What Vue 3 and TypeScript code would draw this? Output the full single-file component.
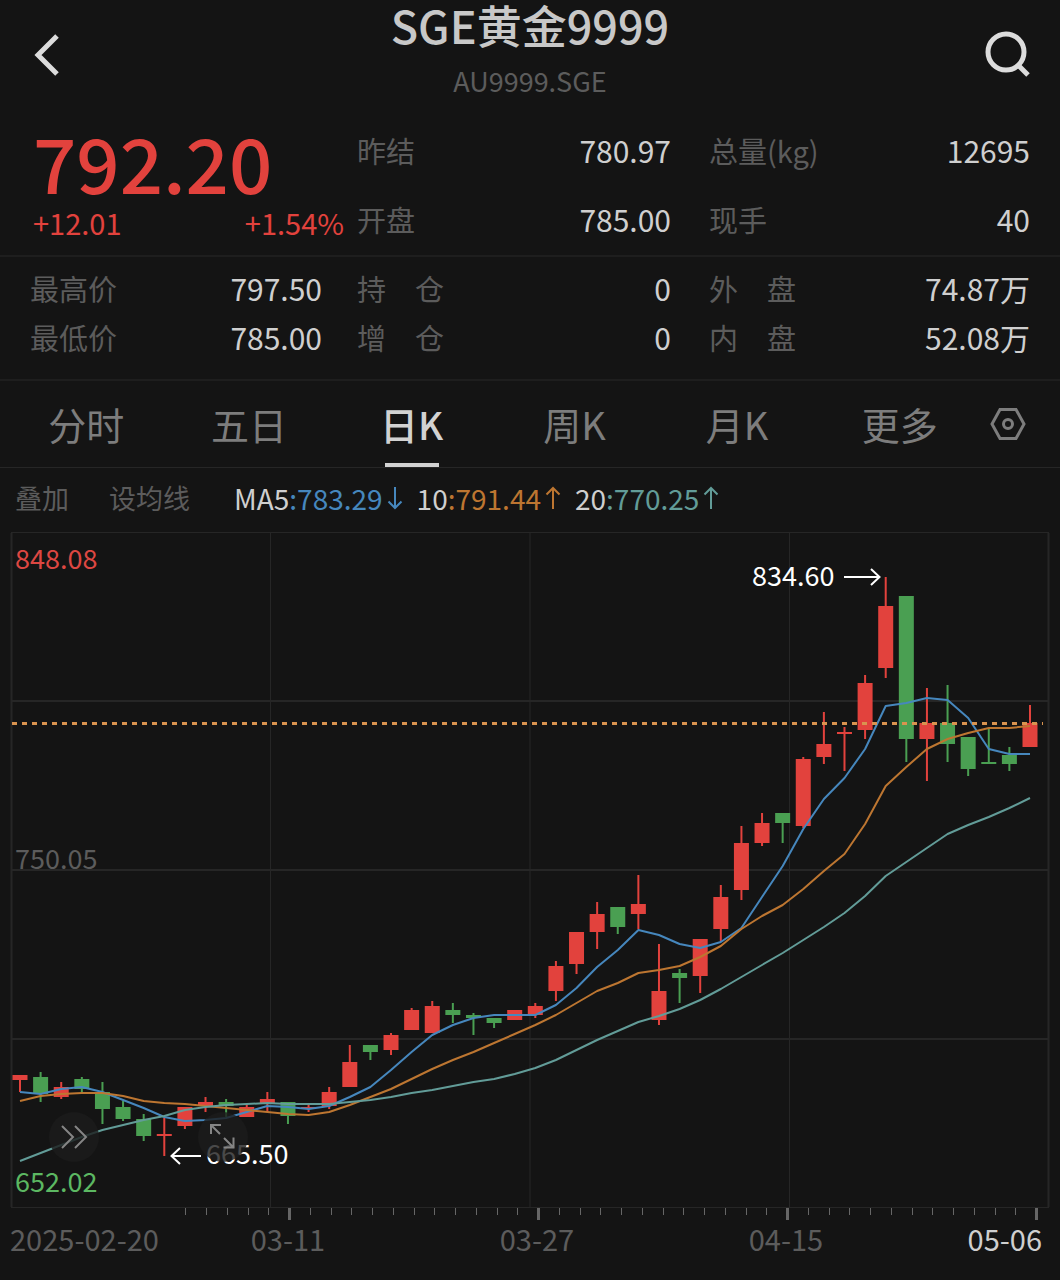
<script setup lang="ts">
import { ref } from 'vue'

type Candle = { up: boolean; top: number; bottom: number; high: number; low: number }

const tabs = ['分时', '五日', '日K', '周K', '月K', '更多']
const active = ref('日K')

const mainQuotes = [
  [
    { label: '昨结', value: '780.97' },
    { label: '开盘', value: '785.00' },
  ],
  [
    { label: '总量(kg)', value: '12695' },
    { label: '现手', value: '40' },
  ],
]

const subQuotes = [
  [
    { label: '最高价', value: '797.50' },
    { label: '最低价', value: '785.00' },
  ],
  [
    { label: '持　仓', value: '0' },
    { label: '增　仓', value: '0' },
  ],
  [
    { label: '外　盘', value: '74.87万' },
    { label: '内　盘', value: '52.08万' },
  ],
]

const averages = [
  { name: 'MA5', value: '783.29', dir: 'down', tone: 'blue' },
  { name: '10', value: '791.44', dir: 'up', tone: 'orange' },
  { name: '20', value: '770.25', dir: 'up', tone: 'teal' },
]

const R = true
const G = false
// direction, body top, body bottom, wick top, wick bottom
const raw: [boolean, number, number, number, number][] = [
  [R, 1075, 1080, 1075, 1092], [G, 1077, 1094, 1072, 1102], [R, 1087, 1097, 1082, 1099],
  [G, 1079, 1089, 1077, 1092], [G, 1092, 1109, 1082, 1124], [G, 1107, 1119, 1101, 1121],
  [G, 1119, 1136, 1114, 1141], [R, 1134, 1136, 1118, 1156], [R, 1107, 1126, 1107, 1129],
  [R, 1102, 1106, 1097, 1112], [G, 1102, 1106, 1099, 1117], [R, 1107, 1117, 1104, 1117],
  [R, 1099, 1104, 1092, 1112], [G, 1102, 1116, 1102, 1124], [R, 1107, 1109, 1105, 1112],
  [R, 1092, 1106, 1087, 1109], [R, 1062, 1087, 1045, 1087], [G, 1045, 1052, 1045, 1060],
  [R, 1035, 1050, 1033, 1055], [R, 1010, 1030, 1008, 1030], [R, 1006, 1033, 1001, 1033],
  [G, 1010, 1015, 1003, 1023], [G, 1015, 1018, 1013, 1035], [G, 1018, 1023, 1018, 1028],
  [R, 1010, 1020, 1010, 1020], [R, 1006, 1015, 1003, 1018], [R, 966, 991, 961, 1001],
  [R, 932, 964, 932, 974], [R, 914, 932, 902, 949], [G, 907, 927, 907, 934],
  [R, 904, 914, 875, 929], [R, 991, 1020, 944, 1025], [G, 973, 978, 969, 1003],
  [R, 939, 976, 939, 993], [R, 897, 929, 885, 941], [R, 843, 890, 826, 900],
  [R, 823, 843, 813, 846], [G, 813, 823, 813, 843], [R, 759, 826, 757, 828],
  [R, 744, 757, 712, 764], [R, 732, 734, 727, 771], [R, 683, 730, 675, 739],
  [R, 606, 668, 577, 678], [G, 596, 739, 596, 762], [R, 723, 739, 688, 781],
  [G, 723, 744, 685, 762], [G, 737, 769, 737, 776], [G, 762, 764, 729, 764],
  [G, 755, 764, 747, 771], [R, 723, 747, 705, 747],
]
const candles: Candle[] = raw.map(([up, top, bottom, high, low]) => ({ up, top, bottom, high, low }))

const ma5 = [
  1092, 1094, 1089, 1087, 1092, 1100, 1108, 1117, 1121, 1120, 1118, 1112, 1106, 1107, 1109, 1106, 1097,
  1087, 1070, 1052, 1035, 1025, 1018, 1015, 1015, 1015, 1005, 988, 967, 950, 930, 935, 944, 948, 942,
  928, 897, 866, 829, 799, 778, 749, 706, 703, 698, 700, 718, 749, 754, 754,
]
const ma10 = [
  1101, 1096, 1094, 1093, 1093, 1096, 1101, 1103, 1104, 1106, 1108, 1110, 1112, 1114, 1115, 1112, 1105,
  1097, 1089, 1079, 1069, 1060, 1052, 1043, 1034, 1025, 1015, 1003, 991, 983, 973, 970, 966, 957, 946,
  929, 916, 905, 889, 871, 854, 824, 786, 767, 749, 739, 733, 728, 728, 726,
]
const ma20 = [
  1161, 1153, 1145, 1137, 1130, 1125, 1120, 1116, 1110, 1107, 1105, 1104, 1103, 1104, 1104, 1104, 1102,
  1100, 1097, 1093, 1090, 1086, 1082, 1079, 1074, 1068, 1060, 1050, 1040, 1031, 1022, 1016, 1009, 1000,
  989, 977, 965, 953, 940, 927, 913, 896, 876, 862, 848, 834, 825, 817, 808, 798,
]

const xAt = (i: number) => 20 + (i * 1010) / 49
const line = (ys: number[]) => ys.map((y, i) => `${xAt(i).toFixed(1)},${y}`).join(' ')

// one tick per trading day, a heavy one every twelve
const ticks = Array.from({ length: 42 }, (_, n) => {
  const k = n - 5
  return { x: Math.round(289 + k * 20.75), major: k % 12 === 0 }
})
</script>

<template>
  <main class="page">
    <header class="top">
      <button class="icon-btn" aria-label="返回">
        <svg width="60" height="60" viewBox="0 0 60 60"><path d="M41 12 22 31 41 50" class="ico" /></svg>
      </button>
      <div class="heading">
        <h1>SGE黄金9999</h1>
        <p>AU9999.SGE</p>
      </div>
      <button class="icon-btn" aria-label="搜索">
        <svg width="60" height="60" viewBox="0 0 60 60">
          <circle cx="22" cy="28" r="18" class="ico" />
          <path d="M34 41 44 51" class="ico" />
        </svg>
      </button>
    </header>

    <section class="quotes main">
      <div class="price">
        <strong>792.20</strong>
        <div class="change"><span>+12.01</span><span>+1.54%</span></div>
      </div>
      <dl v-for="(col, i) in mainQuotes" :key="i">
        <div v-for="q in col" :key="q.label"><dt>{{ q.label }}</dt><dd>{{ q.value }}</dd></div>
      </dl>
    </section>

    <section class="quotes sub">
      <dl v-for="(col, i) in subQuotes" :key="i">
        <div v-for="q in col" :key="q.label"><dt>{{ q.label }}</dt><dd>{{ q.value }}</dd></div>
      </dl>
    </section>

    <nav class="tabs">
      <button v-for="t in tabs" :key="t" class="tab" :class="{ active: t === active }" @click="active = t">
        <span>{{ t }}</span>
      </button>
      <button class="gear" aria-label="设置">
        <svg width="36" height="36" viewBox="0 0 36 36">
          <path d="M10 3.500H26L34 18 26 32.500H10L2 18Z" />
          <circle cx="18" cy="18" r="4.500" />
        </svg>
      </button>
    </nav>

    <div class="averages">
      <button class="link">叠加</button>
      <button class="link">设均线</button>
      <div class="list">
        <span v-for="a in averages" :key="a.name" class="avg" :class="a.tone">
          <span><b>{{ a.name }}</b>:{{ a.value }}</span>
          <svg width="16" height="24" viewBox="0 0 16 24">
            <path v-if="a.dir === 'up'" d="M8 23V2M1.500 8.500 8 2 14.500 8.500" />
            <path v-else d="M8 1V22M1.500 15.500 8 22 14.500 15.500" />
          </svg>
        </span>
      </div>
    </div>

    <section class="chart">
      <svg class="plot" viewBox="0 528 1060 752" role="img" aria-label="日K线图">
        <g class="grid">
          <path d="M11 532.500H1049M11 1207.500H1049M270.500 533V1207M530 533V1207M789.500 533V1207" />
          <path class="thick" d="M11.500 533V1207M1048.500 533V1207M11 701H1049M11 870H1049M11 1039H1049" />
        </g>

        <text class="lab faint" x="15" y="869">750.05</text>

        <g v-for="(c, i) in candles" :key="i" :class="c.up ? 'rise' : 'fall'">
          <rect :x="xAt(i) - 1" :y="c.high" width="2" :height="c.low - c.high" />
          <rect :x="xAt(i) - 7.5" :y="c.top" width="15" :height="c.bottom - c.top" />
        </g>

        <polyline class="ma blue" :points="line(ma5)" />
        <polyline class="ma orange" :points="line(ma10)" />
        <polyline class="ma teal" :points="line(ma20)" />
        <path class="now" d="M12 723.500H1043" />

        <text class="lab red" x="15" y="569">848.08</text>
        <text class="lab green" x="15" y="1192">652.02</text>

        <text class="lab white" x="752" y="586">834.60</text>
        <path class="arrow" d="M844 577H879M871 569 879.500 577 871 585" />
        <text class="lab white" x="206" y="1164">665.50</text>
        <path class="arrow" d="M201 1156H171M180 1148 171.500 1156 180 1164" />

        <rect
          v-for="t in ticks" :key="t.x" class="tick"
          :x="t.major ? t.x - 1 : t.x" y="1208" :width="t.major ? 3 : 1" :height="t.major ? 12 : 7"
        />
        <text class="date faint" x="10" y="1251">2025-02-20</text>
        <text class="date faint mid" x="288" y="1251">03-11</text>
        <text class="date faint mid" x="537" y="1251">03-27</text>
        <text class="date faint mid" x="786" y="1251">04-15</text>
        <text class="date light end" x="1042" y="1251">05-06</text>
      </svg>

      <button class="float more" aria-label="展开">
        <svg width="48" height="48" viewBox="0 0 48 48"><path d="M12 13 23 24 12 35M25 13 36 24 25 35" /></svg>
      </button>
      <button class="float full" aria-label="全屏">
        <svg width="48" height="48" viewBox="0 0 48 48">
          <path d="M12 21V12H22M12.500 12.500 21 21M25 25 34 34M24.500 34.500H34.500V24.500" />
        </svg>
      </button>
    </section>
  </main>
</template>

<style>
body {
  margin: 0;
  background: #141414;
}
</style>

<style scoped>
.page {
  background: #141414;
  color: #cfcfcf;
  font-family: "Noto Sans CJK SC", sans-serif;
}

button {
  padding: 0;
  border: 0;
  background: none;
  color: inherit;
  font: inherit;
  cursor: pointer;
}

svg {
  display: block;
  fill: none;
}

h1,
p,
dl,
dd {
  margin: 0;
}

.top {
  display: flex;
  align-items: center;
  justify-content: space-between;
  height: 108px;
  padding: 0 16px;
}

.ico {
  stroke: #dcdcdc;
  stroke-width: 5;
}

.heading {
  align-self: flex-start;
  text-align: center;
}

h1 {
  color: #c8c8c8;
  font-size: 45px;
  font-weight: 500;
  line-height: 50px;
}

.heading p {
  margin-top: 12px;
  color: #5c5c5c;
  font-size: 27px;
  line-height: 38px;
}

.quotes {
  display: grid;
  grid-template-columns: 327fr 352fr 321fr;
  padding: 0 30px;
  border-bottom: 2px solid #1e1e1e;
}

.quotes > :nth-child(2) {
  padding-right: 38px;
}

.quotes dl {
  display: flex;
  flex-direction: column;
}

.quotes dl div {
  display: flex;
  justify-content: space-between;
  line-height: 36px;
}

dt {
  color: #5c5c5c;
  font-size: 29px;
}

dd {
  font-size: 30px;
}

.main {
  padding-top: 24px;
  padding-bottom: 15px;
}

.main dl {
  gap: 33px;
}

.sub {
  padding-top: 13px;
  padding-bottom: 24px;
}

.sub dl {
  gap: 13px;
}

.sub > :first-child {
  padding-right: 35px;
}

.price {
  padding-right: 13px;
  padding-left: 3px;
  color: #e2423d;
}

.price strong {
  display: block;
  font-size: 76px;
  font-weight: 500;
  line-height: 58px;
}

.change {
  display: flex;
  justify-content: space-between;
  margin-top: 14px;
  font-size: 29px;
  line-height: 36px;
}

.tabs {
  display: flex;
  padding: 0 25px 0 5px;
  border-bottom: 1px solid #262626;
}

.tab {
  position: relative;
  flex: 163 1 0;
  color: #7d7d7d;
  font-size: 38px;
  line-height: 86px;
}

.tab.active {
  color: #d2d2d2;
  font-weight: 500;
}

.tab.active::after {
  position: absolute;
  bottom: 0;
  left: 50%;
  width: 54px;
  height: 4px;
  margin-left: -27px;
  background: #d2d2d2;
  content: "";
}

.gear {
  display: flex;
  flex: 54 1 0;
  align-items: center;
  justify-content: center;
}

.gear svg {
  stroke: #7d7d7d;
  stroke-width: 3;
}

.averages {
  display: flex;
  align-items: center;
  height: 60px;
  padding-left: 15px;
  font-size: 27px;
  line-height: 36px;
}

.link {
  margin-right: 40px;
  color: #5c5c5c;
}

.list {
  display: flex;
  gap: 14px;
  margin-left: 4px;
  font-size: 28px;
}

.avg {
  display: flex;
  gap: 4px;
  align-items: center;
}

.avg b {
  color: #cfcfcf;
  font-weight: 400;
}

.avg svg {
  stroke: currentColor;
  stroke-width: 2;
}

.blue {
  color: #4687bd;
}

.orange {
  color: #bd7631;
}

.teal {
  color: #629c98;
}

.chart {
  position: relative;
}

.plot {
  width: 100%;
  height: auto;
}

.grid {
  stroke: #262626;
  stroke-width: 1;
}

.grid .thick {
  stroke-width: 2;
}

.rise {
  fill: #e2423d;
}

.fall {
  fill: #4a9f52;
}

.ma {
  stroke: currentColor;
  stroke-width: 2;
  stroke-linejoin: round;
}

.now {
  stroke: #d9934f;
  stroke-width: 3;
  stroke-dasharray: 5 5;
}

.lab {
  font-size: 27px;
}

.date {
  font-size: 29px;
}

.mid {
  text-anchor: middle;
}

.end {
  text-anchor: end;
}

.red {
  fill: #dd4742;
}

.green {
  fill: #5cb862;
}

.faint {
  fill: #5c5c5c;
}

.light {
  fill: #cfcfcf;
}

.white {
  fill: #fff;
}

.arrow {
  stroke: #fff;
  stroke-width: 2;
}

.tick {
  fill: #666;
}

.float {
  position: absolute;
  top: 81%;
  width: 50px;
  height: 50px;
  margin: -25px 0 0 -25px;
  border-radius: 50%;
  background: rgba(27, 27, 27, 0.8);
}

.float svg {
  margin: 1px;
  stroke: #858585;
  stroke-width: 2;
}

.more {
  left: 7%;
}

.full {
  left: 21%;
}
</style>
